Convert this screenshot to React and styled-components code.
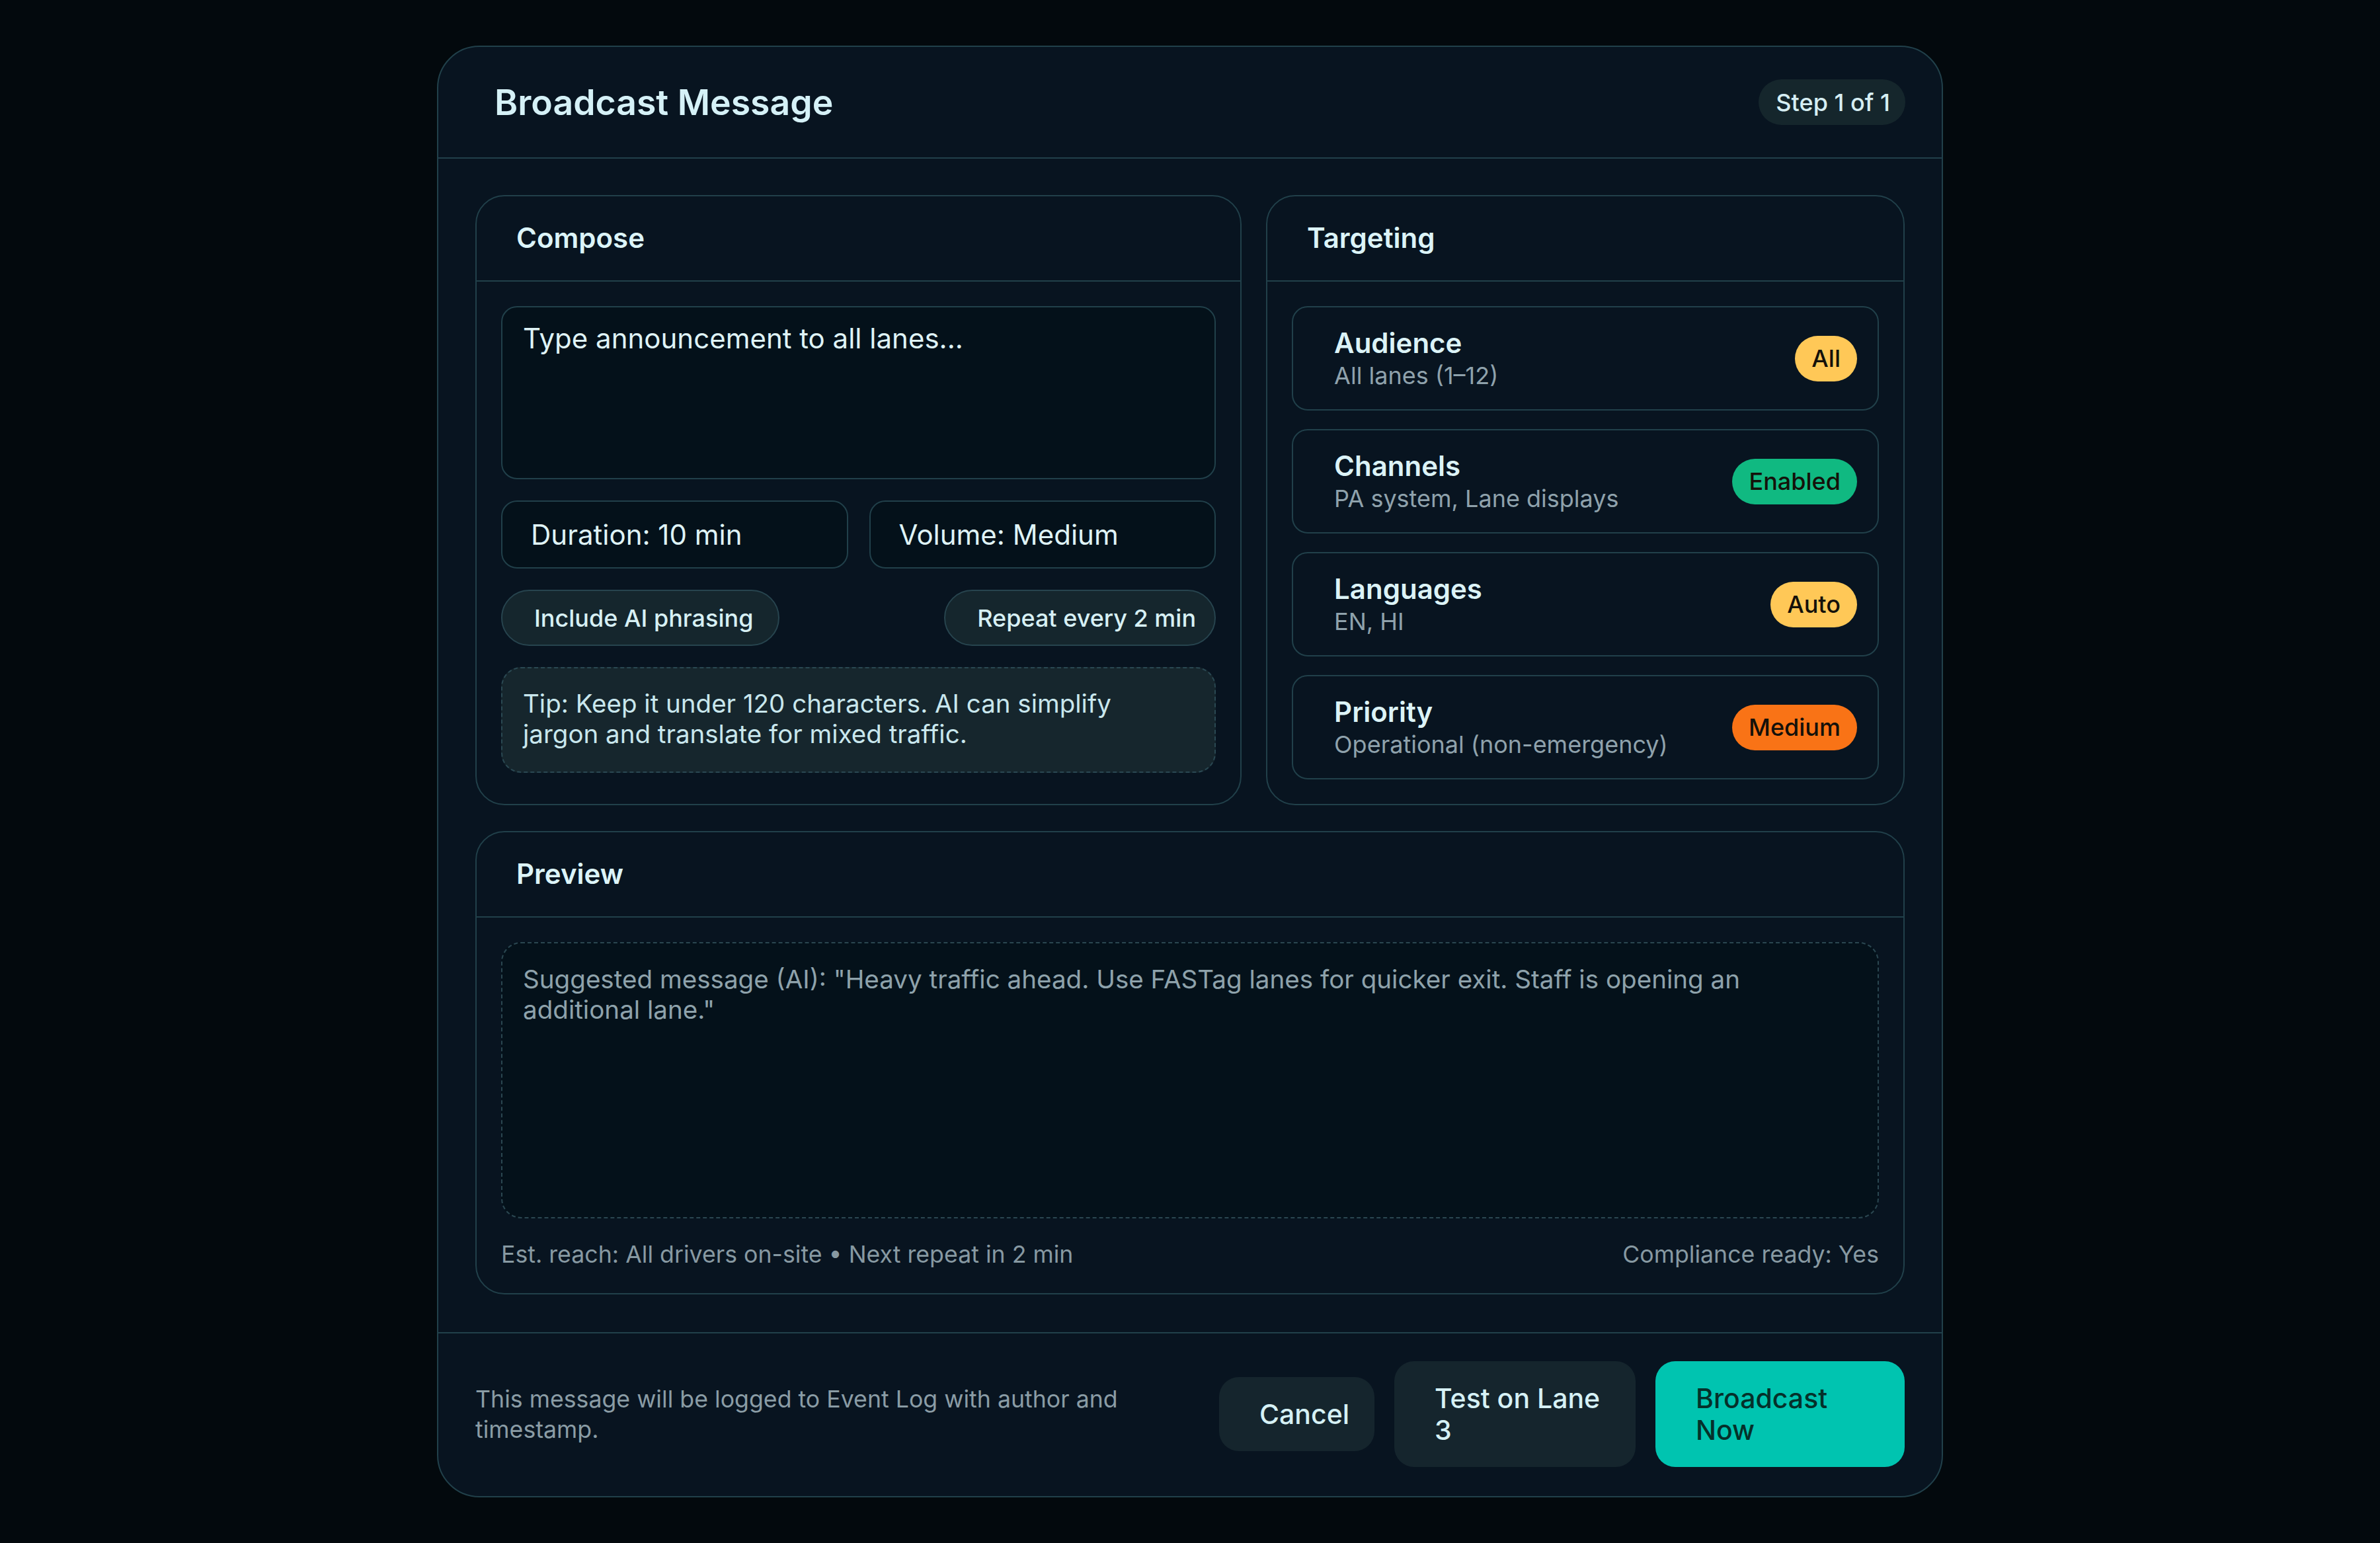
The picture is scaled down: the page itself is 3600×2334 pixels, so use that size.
import React from "react";
import styled, { createGlobalStyle } from "styled-components";

const line = "#21404a";

const GlobalStyle = createGlobalStyle`
  * { box-sizing: border-box; }
  html, body {
    margin: 0;
    background: #03090d;
  }
  body {
    font-family: Inter, "Noto Sans", "Liberation Sans", sans-serif;
    color: #dcf3f7;
  }
`;

const Page = styled.div`
  min-height: 100vh;
  display: flex;
  align-items: center;
  justify-content: center;
`;

const Modal = styled.div`
  width: 2278px;
  background: #081420;
  border: 2px solid ${line};
  border-radius: 64px;
  overflow: hidden;
`;

const Header = styled.header`
  display: flex;
  align-items: center;
  justify-content: space-between;
  padding: 49px 55px 49px 85px;
  border-bottom: 2px solid ${line};
`;

const Title = styled.h1`
  margin: 0;
  font-size: 53.5px;
  font-weight: 600;
  line-height: 1.2;
  color: #d5f1f7;
`;

const StepPill = styled.span`
  display: inline-flex;
  align-items: center;
  height: 69px;
  padding: 0 23px 0 26px;
  border-radius: 999px;
  background: #15262c;
  font-size: 36px;
  font-weight: 500;
  color: #d6eef3;
`;

const Body = styled.div`
  display: flex;
  flex-direction: column;
  gap: 39px;
  padding: 55px 56px 57px;
`;

const TopRow = styled.div`
  display: grid;
  grid-template-columns: 1.2fr 1fr;
  gap: 37px;
`;

const Card = styled.section`
  display: flex;
  flex-direction: column;
  border: 2px solid ${line};
  border-radius: 44px;
`;

const CardHeader = styled.div`
  padding: 38px 60px;
  border-bottom: 2px solid ${line};
`;

const CardTitle = styled.h2`
  margin: 0;
  font-size: 42px;
  font-weight: 600;
  line-height: 1.21;
  color: #dcf4f8;
`;

const CardBody = styled.div`
  flex: 1;
  display: flex;
  flex-direction: column;
  gap: ${(p) => p.$gap}px;
  padding: 37px;
`;

const MessageInput = styled.textarea`
  display: block;
  width: 100%;
  height: 262px;
  resize: none;
  padding: 22px 31px;
  background: #04111a;
  border: 2px solid ${line};
  border-radius: 24px;
  font-family: inherit;
  font-size: 42px;
  line-height: 1.21;
  color: #dff3f6;
  outline: none;

  &::placeholder {
    color: #dff3f6;
    opacity: 1;
  }
`;

const FieldRow = styled.div`
  display: grid;
  grid-template-columns: 1fr 1fr;
  gap: 32px;
`;

const Field = styled.div`
  display: flex;
  align-items: center;
  height: 103px;
  padding: 0 43px;
  background: #04111a;
  border: 2px solid ${line};
  border-radius: 24px;
  font-size: 42px;
  color: #dff3f6;
`;

const PillRow = styled.div`
  display: flex;
  justify-content: space-between;
`;

const Pill = styled.button`
  display: inline-flex;
  align-items: center;
  height: 85px;
  padding: 0 ${(p) => p.$padRight}px 0 48px;
  border-radius: 999px;
  background: #15262d;
  border: 2px solid #27444e;
  font-family: inherit;
  font-size: 36px;
  font-weight: 500;
  color: #d7f0f4;
`;

const Tip = styled.div`
  padding: 30px 60px 34px 31px;
  background: #16262d;
  border: 2px dashed #2a4852;
  border-radius: 30px;
  font-size: 38.5px;
  line-height: 1.2;
  color: #c9e7ed;
`;

const Item = styled.div`
  display: flex;
  align-items: center;
  justify-content: space-between;
  height: 158px;
  padding: 0 31px 0 62px;
  border: 2px solid ${line};
  border-radius: 24px;
`;

const ItemTitle = styled.div`
  font-size: 42px;
  font-weight: 600;
  line-height: 1.21;
  color: #dcf3f7;
`;

const ItemSub = styled.div`
  margin-top: 2px;
  font-size: 36px;
  line-height: 1.21;
  color: #8fa2ac;
`;

const tones = {
  yellow: "#ffc857",
  green: "#10b981",
  orange: "#f97316",
};

const Badge = styled.span`
  display: inline-flex;
  align-items: center;
  height: 69px;
  padding: 0 25px;
  border-radius: 999px;
  background: ${(p) => tones[p.$tone]};
  font-size: 36px;
  font-weight: 500;
  color: #14110a;
`;

const PreviewBox = styled.div`
  min-height: 418px;
  padding: 31px 80px 31px 31px;
  background: #04111a;
  border: 2px dashed #2a4650;
  border-radius: 30px;
  font-size: 38.6px;
  line-height: 1.2;
  color: #8ea2ab;
`;

const Stats = styled.div`
  display: flex;
  justify-content: space-between;
  font-size: 35.7px;
  color: #8799a2;
`;

const Footer = styled.footer`
  display: flex;
  align-items: center;
  gap: 30px;
  padding: 42px 56px 44px;
  border-top: 2px solid ${line};
`;

const Note = styled.p`
  flex: 1;
  margin: 0;
  font-size: 35.7px;
  line-height: 46px;
  color: #8a9ca5;
`;

const Button = styled.button`
  flex: none;
  width: ${(p) => p.$w}px;
  padding: 32px 40px 32px 61px;
  border: none;
  border-radius: 30px;
  background: ${(p) => (p.$primary ? "#00c4b0" : "#15252d")};
  color: ${(p) => (p.$primary ? "#05302a" : "#d6f1f5")};
  font-family: inherit;
  font-size: 41px;
  font-weight: 500;
  line-height: 48px;
  text-align: left;
`;

const targets = [
  { title: "Audience", sub: "All lanes (1–12)", badge: "All", tone: "yellow" },
  { title: "Channels", sub: "PA system, Lane displays", badge: "Enabled", tone: "green" },
  { title: "Languages", sub: "EN, HI", badge: "Auto", tone: "yellow" },
  { title: "Priority", sub: "Operational (non-emergency)", badge: "Medium", tone: "orange" },
];

export default function App() {
  return (
    <>
      <GlobalStyle />
      <Page>
        <Modal>
          <Header>
            <Title>Broadcast Message</Title>
            <StepPill>Step 1 of 1</StepPill>
          </Header>

          <Body>
            <TopRow>
              <Card>
                <CardHeader>
                  <CardTitle>Compose</CardTitle>
                </CardHeader>
                <CardBody $gap={32}>
                  <MessageInput placeholder="Type announcement to all lanes..." />
                  <FieldRow>
                    <Field>Duration: 10 min</Field>
                    <Field>Volume: Medium</Field>
                  </FieldRow>
                  <PillRow>
                    <Pill $padRight={38}>Include AI phrasing</Pill>
                    <Pill $padRight={28}>Repeat every 2 min</Pill>
                  </PillRow>
                  <Tip>
                    Tip: Keep it under 120 characters. AI can simplify jargon and
                    translate for mixed traffic.
                  </Tip>
                </CardBody>
              </Card>

              <Card>
                <CardHeader>
                  <CardTitle>Targeting</CardTitle>
                </CardHeader>
                <CardBody $gap={28}>
                  {targets.map((t) => (
                    <Item key={t.title}>
                      <div>
                        <ItemTitle>{t.title}</ItemTitle>
                        <ItemSub>{t.sub}</ItemSub>
                      </div>
                      <Badge $tone={t.tone}>{t.badge}</Badge>
                    </Item>
                  ))}
                </CardBody>
              </Card>
            </TopRow>

            <Card>
              <CardHeader>
                <CardTitle>Preview</CardTitle>
              </CardHeader>
              <CardBody $gap={32}>
                <PreviewBox>
                  Suggested message (AI): "Heavy traffic ahead. Use FASTag lanes for
                  quicker exit. Staff is opening an additional lane."
                </PreviewBox>
                <Stats>
                  <span>Est. reach: All drivers on-site • Next repeat in 2 min</span>
                  <span>Compliance ready: Yes</span>
                </Stats>
              </CardBody>
            </Card>
          </Body>

          <Footer>
            <Note>
              This message will be logged to Event Log with author and timestamp.
            </Note>
            <Button $w={235}>Cancel</Button>
            <Button $w={365}>Test on Lane 3</Button>
            <Button $w={377} $primary>
              Broadcast Now
            </Button>
          </Footer>
        </Modal>
      </Page>
    </>
  );
}
